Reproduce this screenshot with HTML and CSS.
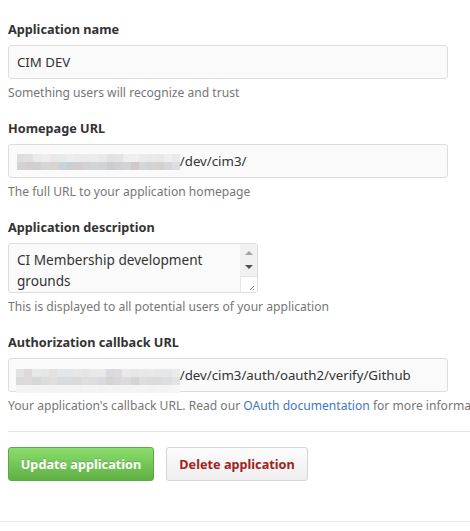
FILE: index.html
```html
<!DOCTYPE html>
<html>
<head>
<meta charset="utf-8">
<link rel="stylesheet" href="styles.css">
</head>
<body>
<div class="page">
  <form class="form">
    <div class="group">
      <label class="label">Application name</label>
      <div class="input"><span class="val">CIM DEV</span></div>
      <p class="hint">Something users will recognize and trust</p>
    </div>
    <div class="group">
      <label class="label">Homepage URL</label>
      <div class="input">
        <span class="mosaic m2">
          <i style="background:#dedede"></i><i style="background:#e2dfe0"></i><i style="background:#e9eaea"></i><i style="background:#eeeded"></i><i style="background:#ebe7e6"></i><i style="background:#e7eaec"></i><i style="background:#ebedee"></i><i style="background:#ecebeb"></i><i style="background:#ebebeb"></i><i style="background:#ececec"></i><i style="background:#e9e9ea"></i><i style="background:#e2e2e5"></i><i style="background:#e5e3e4"></i><i style="background:#eeeeee"></i><i style="background:#efefef"></i><i style="background:#ebebeb"></i><i style="background:#eaeaea"></i><i style="background:#e6e8ea"></i><i style="background:#eeeeee"></i><i style="background:#e9e9ea"></i>
          <i style="background:#d3d3d3"></i><i style="background:#d5ced1"></i><i style="background:#cfd1d1"></i><i style="background:#d6d6d6"></i><i style="background:#dbd3cd"></i><i style="background:#cbd3d8"></i><i style="background:#c8d0d4"></i><i style="background:#d1cdce"></i><i style="background:#d3d1d3"></i><i style="background:#d2d4d5"></i><i style="background:#d0d3d5"></i><i style="background:#cbcccc"></i><i style="background:#d1cfd5"></i><i style="background:#d4d3d3"></i><i style="background:#cfcac8"></i><i style="background:#d3d6da"></i><i style="background:#d5d3d1"></i><i style="background:#d4d1ce"></i><i style="background:#d5d8db"></i><i style="background:#dcdee1"></i>
        </span><span class="val">/dev/cim3/</span>
      </div>
      <p class="hint">The full URL to your application homepage</p>
    </div>
    <div class="group">
      <label class="label">Application description</label>
      <div class="textarea">
        <div class="ta-text">CI Membership development grounds</div>
        <div class="scrollbar">
          <span class="arrow up"></span>
          <span class="arrow down"></span>
          <span class="grip">
            <svg width="16" height="16" viewBox="0 0 16 16"><path d="M13 9 L9 13 M13 12 L12 13" stroke="#888" stroke-width="1" fill="none"/></svg>
          </span>
        </div>
      </div>
      <p class="hint">This is displayed to all potential users of your application</p>
    </div>
    <div class="group">
      <label class="label">Authorization callback URL</label>
      <div class="input">
        <span class="mosaic m3">
          <i style="background:#e2e2e2"></i><i style="background:#ddd8da"></i><i style="background:#e7e8e8"></i><i style="background:#e6e6e6"></i><i style="background:#e6e1df"></i><i style="background:#e4e7e9"></i><i style="background:#e3e6e8"></i><i style="background:#e8e7e7"></i><i style="background:#e5e5e5"></i><i style="background:#e9e9e9"></i><i style="background:#e8e8e6"></i><i style="background:#dadade"></i><i style="background:#dedbdd"></i><i style="background:#eaeaea"></i><i style="background:#e4e6e8"></i><i style="background:#e8e8e8"></i><i style="background:#e9e9e9"></i><i style="background:#e7e7e7"></i><i style="background:#e5e8ea"></i><i style="background:#ebebeb"></i>
          <i style="background:#dadada"></i><i style="background:#dddad9"></i><i style="background:#d5d8d7"></i><i style="background:#dcdcdc"></i><i style="background:#e2ded9"></i><i style="background:#d7dcdf"></i><i style="background:#d9dde0"></i><i style="background:#dbd9da"></i><i style="background:#e0dee0"></i><i style="background:#dcdee0"></i><i style="background:#d8dadd"></i><i style="background:#d4d4d4"></i><i style="background:#d9d7dc"></i><i style="background:#dcdbdb"></i><i style="background:#d8d4d3"></i><i style="background:#dcdfe2"></i><i style="background:#dddbda"></i><i style="background:#dedcda"></i><i style="background:#dcdee0"></i><i style="background:#e2e4e6"></i>
          <i style="background:#f4f4f4"></i><i style="background:#f3f3f3"></i><i style="background:#f4f4f4"></i><i style="background:#f4f4f4"></i><i style="background:#f3f3f3"></i><i style="background:#f4f4f4"></i><i style="background:#f4f4f4"></i><i style="background:#f3f3f3"></i><i style="background:#f4f4f4"></i><i style="background:#f4f4f4"></i><i style="background:#f3f3f3"></i><i style="background:#f4f4f4"></i><i style="background:#f4f4f4"></i><i style="background:#f3f3f3"></i><i style="background:#f4f4f4"></i><i style="background:#f4f4f4"></i><i style="background:#f3f3f3"></i><i style="background:#f4f4f4"></i><i style="background:#f4f4f4"></i><i style="background:#f6f6f6"></i>
        </span><span class="val">/dev/cim3/auth/oauth2/verify/Github</span>
      </div>
      <p class="hint clip">Your application's callback URL. Read our <a href="#" class="link">OAuth documentation</a> for more informa</p>
    </div>
    <hr class="rule">
    <div class="actions">
      <button type="button" class="btn btn-primary">Update application</button>
      <button type="button" class="btn btn-danger">Delete application</button>
    </div>
  </form>
  <div class="footer-line"></div>
</div>
</body>
</html>
```

FILE: styles.css
```css
html, body {
  margin: 0;
  padding: 0;
  background: #fff;
  overflow: hidden;
}
body {
  font-family: "Noto Sans", "Open Sans", sans-serif;
  color: #333;
  width: 470px;
  height: 531px;
}
.page {
  padding-top: 19px;
}
.form {
  padding-left: 8px;
}
.group {
  display: flex;
  flex-direction: column;
  margin-bottom: 16px;
}
.label {
  font-size: 12.7px;
  font-weight: 700;
  line-height: 20px;
  color: #333;
  margin-bottom: 6px;
}
.input {
  box-sizing: border-box;
  width: 440px;
  height: 34px;
  background: #fafafa;
  border: 1px solid #ddd;
  border-radius: 3px;
  padding: 0 8px;
  display: flex;
  align-items: center;
  font-size: 13.25px;
  color: #333;
  white-space: nowrap;
}
.val {
  line-height: 20px;
}
.mosaic {
  display: grid;
  grid-template-columns: repeat(20, 8.15px);
  grid-auto-rows: 8px;
  flex: none;
}
.mosaic i {
  display: block;
}
.m2 {
  margin-top: 2px;
}
.m3 {
  align-self: flex-end;
  margin-bottom: -2px;
  margin-left: -1px;
  grid-template-columns: repeat(20, 8.2px);
}
.hint {
  margin: 5px 0 0;
  font-size: 12.1px;
  line-height: 18px;
  color: #767676;
}
.clip {
  white-space: nowrap;
  overflow: hidden;
  width: 462px;
}
.link {
  color: #4078c0;
  text-decoration: none;
}
.textarea {
  box-sizing: border-box;
  width: 250px;
  height: 50px;
  background: #fafafa;
  border: 1px solid #ddd;
  border-radius: 3px;
  display: flex;
  overflow: hidden;
}
.ta-text {
  flex: 1;
  padding: 5px 8px 0;
  font-size: 13.6px;
  line-height: 21px;
  color: #333;
}
.scrollbar {
  width: 17px;
  display: flex;
  flex-direction: column;
  align-items: center;
  background: #f1f1f1;
}
.arrow {
  width: 0;
  height: 0;
  border-left: 4px solid transparent;
  border-right: 4px solid transparent;
}
.up {
  margin-top: 7px;
  border-bottom: 4px solid #a3a3a3;
}
.down {
  margin-top: 10px;
  border-top: 4px solid #505050;
}
.grip {
  margin-top: auto;
  width: 17px;
  height: 16px;
  background: #fff;
  border-top: 1px solid #e6e6e6;
  border-left: 1px solid #e6e6e6;
  box-sizing: border-box;
  display: flex;
}
.rule {
  border: 0;
  border-top: 1px solid #e5e5e5;
  margin: 12px 0 0;
  height: 0;
}
.actions {
  display: flex;
  gap: 12px;
  padding-top: 15px;
}
.btn {
  box-sizing: border-box;
  height: 34px;
  padding: 0;
  font-family: inherit;
  font-size: 12.7px;
  font-weight: 700;
  border-radius: 3px;
  white-space: nowrap;
  cursor: pointer;
}
.btn-primary {
  width: 146px;
  color: #fff;
  text-shadow: 0 -1px 0 rgba(0,0,0,0.15);
  background: linear-gradient(#8add6d, #60b044);
  border: 1px solid #5ca941;
}
.btn-danger {
  width: 142px;
  color: #9e2322;
  background: linear-gradient(#fcfcfc, #eeeeee);
  border: 1px solid #d5d5d5;
}
.footer-line {
  margin-top: 40px;
  border-top: 1px solid #eaeaea;
}
```
